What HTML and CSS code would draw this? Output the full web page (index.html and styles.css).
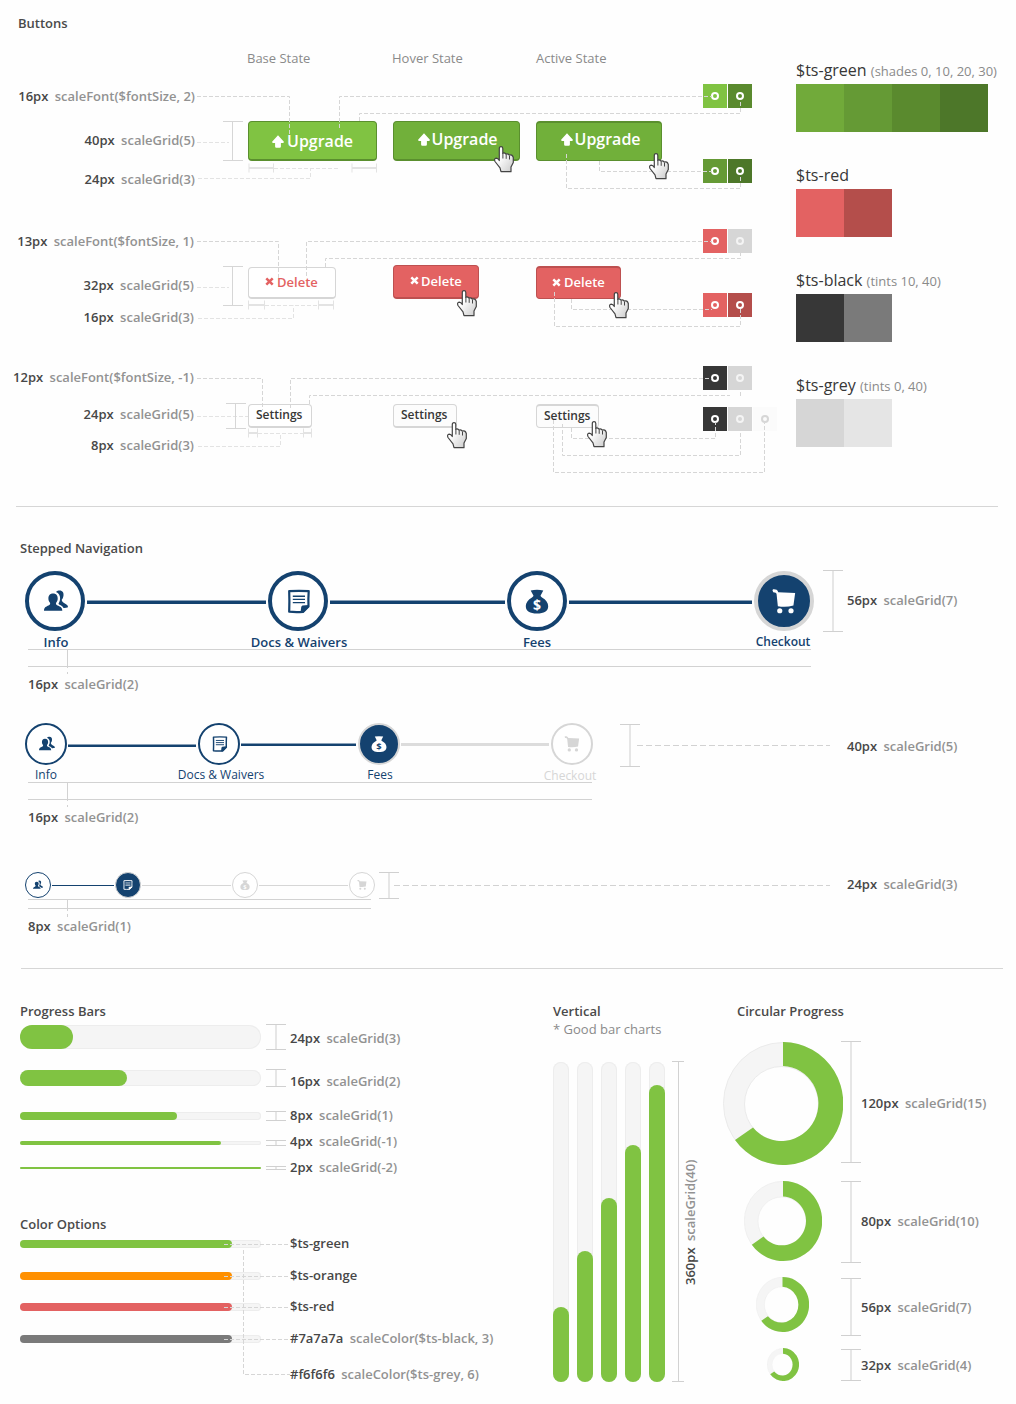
FILE: index.html
```html
<!DOCTYPE html>
<html lang="en">
<head>
<meta charset="utf-8">
<title>UI Scale Guide</title>
<link rel="stylesheet" href="styles.css">
</head>
<body>
<svg class="defs" width="0" height="0" aria-hidden="true">
  <defs>
    <linearGradient id="hand" x1="0" y1="0" x2="1" y2="1"><stop offset=".35" stop-color="#fff"/><stop offset="1" stop-color="#c9c9c9"/></linearGradient>
  </defs>
</svg>
<svg class="symbols" aria-hidden="true">
  <symbol id="i-people" viewBox="0 0 24 24">
    <path fill="currentColor" d="M9 4C5.700 4 4.400 6.300 4.400 9c0 2 .8 3.400 1.700 4.400.2 1.200-.3 2-1.600 2.600C2.500 17 0 17.600 0 21.200h18.300c0-3.600-2.500-4.200-4.700-5.200-1.300-.6-1.800-1.400-1.600-2.600.9-1 1.700-2.400 1.700-4.400 0-2.700-1.200-5-4.700-5z"/>
    <path fill="currentColor" d="M12 2.500C13 1.300 14.300 1 15.500 1c3.300 0 4.300 2.400 4 4.900-.2 2-.9 3.200-1.700 4.200-.1 1.200.3 2 1.500 2.900 2 1.500 4.700 2 4.700 4.700-1.500.6-3 .8-4.500.7-.9-1.500-2.300-2.400-4-3.100-1-.4-1.100-1-.7-1.700 1-1.700 1.300-3.200 1.300-5 0-2.700-1.300-4.900-4.100-6.100z"/>
  </symbol>
  <symbol id="i-doc" viewBox="0 0 24 24">
    <path fill="none" stroke="currentColor" stroke-width="2.200" stroke-linejoin="round" d="M2.200 1.700Q12 .9 21.700 1.700Q21.200 9 21.500 17L16 22.400Q8 22.900 2.200 22.200Q2.600 12 2.200 1.700z"/>
    <path fill="currentColor" d="M13.500 22.800L14.300 17.200L15.400 16L21.700 15.500V17.500L16.400 23z"/>
    <path stroke="currentColor" stroke-width="1.400" d="M5.800 6.700h12.200M5.800 9.900h12.200M5.800 13.100h12.200"/>
  </symbol>
  <symbol id="i-bag" viewBox="0 0 24 24">
    <path fill="currentColor" d="M5.700.9Q12-.3 18.300.9L15.500 6.300Q15.600 7 17 8C21 10 23.200 13.500 23.200 16.500C23.200 22 19 24 12 24S.8 22 .8 16.500C.8 13.500 3 10 7 8Q8.400 7 8.500 6.300z"/>
    <text class="coin" x="12" y="20.600" text-anchor="middle">$</text>
  </symbol>
  <symbol id="i-cart" viewBox="0 0 24 26">
    <path fill="currentColor" d="M0 1.200L.6.300C3 .1 5.400.5 6 3.300L23.600 4.200L21.800 17.200Q14 19.300 5.600 17.900L4.300 5.500C4 3.800 3 3.400.8 3.300z"/>
    <circle fill="currentColor" cx="7.600" cy="22.600" r="2.700"/><circle fill="currentColor" cx="19.300" cy="22.600" r="2.700"/>
  </symbol>
  <symbol id="i-up" viewBox="0 0 12 13"><path fill="currentColor" d="M6 .2L11.900 6.700L11.400 8H8.900V11.600Q8.900 12.800 7.700 12.800H4.300Q3.100 12.800 3.100 11.600V8H.6L.1 6.700z"/></symbol>
  <symbol id="i-x" viewBox="0 0 9 9"><path stroke="currentColor" stroke-width="2.500" d="M1.300 1.300L7.700 7.700M7.700 1.300L1.300 7.700"/></symbol>
  <symbol id="i-hand" viewBox="0 0 21 27">
    <path fill="url(#hand)" stroke="#444" stroke-width="1.200" stroke-linejoin="round" d="M5.300 14.500V2.500Q5.300.7 7 .7T8.800 2.500V7.300Q10.300 6.300 12 8.200Q13.500 7.200 15.200 9Q18.200 8 19.300 11.500V16.500L17 21V25.700H7L6 21.800L1 15.500Q-.2 12.400 2.200 12.200Q4 12.300 5.300 14.500z"/>
    <path fill="none" stroke="#444" stroke-width="1" d="M8.900 7v5.500M12.200 8.500v4.300M15.500 9.500v4"/>
  </symbol>
</svg>

<main class="sheet">
  <section class="buttons">
    <div class="board">
      <h2 class="title">Buttons</h2>
      <div class="row states"><span></span><span>Base State</span><span>Hover State</span><span>Active State</span></div>

      <div class="row group large">
        <div class="labels"><p><b>16px</b> scaleFont($fontSize, 2)</p><p><b>40px</b> scaleGrid(5)</p><p><b>24px</b> scaleGrid(3)</p></div>
        <div class="cell"><button class="btn green base"><svg><use href="#i-up"/></svg>Upgrade</button></div>
        <div class="cell"><button class="btn green hover"><svg><use href="#i-up"/></svg>Upgrade</button><svg class="cursor c1"><use href="#i-hand"/></svg></div>
        <div class="cell"><button class="btn green active"><svg><use href="#i-up"/></svg>Upgrade</button><svg class="cursor c2"><use href="#i-hand"/></svg></div>
        <div class="chips"><div><i class="g0"></i><i class="g2"></i></div><div><i class="g1"></i><i class="g3"></i></div></div>
      </div>

      <div class="row group medium">
        <div class="labels"><p><b>13px</b> scaleFont($fontSize, 1)</p><p><b>32px</b> scaleGrid(5)</p><p><b>16px</b> scaleGrid(3)</p></div>
        <div class="cell"><button class="btn red base"><svg><use href="#i-x"/></svg>Delete</button></div>
        <div class="cell"><button class="btn red hover"><svg><use href="#i-x"/></svg>Delete</button><svg class="cursor c3"><use href="#i-hand"/></svg></div>
        <div class="cell"><button class="btn red active"><svg><use href="#i-x"/></svg>Delete</button><svg class="cursor c4"><use href="#i-hand"/></svg></div>
        <div class="chips"><div><i class="r0"></i><i class="y0"></i></div><div><i class="r0"></i><i class="r1"></i></div></div>
      </div>

      <div class="row group small">
        <div class="labels"><p><b>12px</b> scaleFont($fontSize, -1)</p><p><b>24px</b> scaleGrid(5)</p><p><b>8px</b> scaleGrid(3)</p></div>
        <div class="cell"><button class="btn plain base">Settings</button></div>
        <div class="cell"><button class="btn plain hover">Settings</button><svg class="cursor c5"><use href="#i-hand"/></svg></div>
        <div class="cell"><button class="btn plain active">Settings</button><svg class="cursor c6"><use href="#i-hand"/></svg></div>
        <div class="chips"><div><i class="k0"></i><i class="y0"></i></div><div><i class="k0"></i><i class="y0"></i><i class="y2"></i></div></div>
      </div>
    </div>

    <aside class="palette">
      <div><h3>$ts-green <small>(shades 0, 10, 20, 30)</small></h3><p><i class="s1"></i><i class="g1"></i><i class="g2"></i><i class="g3"></i></p></div>
      <div><h3>$ts-red</h3><p><i class="r0"></i><i class="r1"></i></p></div>
      <div><h3>$ts-black <small>(tints 10, 40)</small></h3><p><i class="k0"></i><i class="k1"></i></p></div>
      <div><h3>$ts-grey <small>(tints 0, 40)</small></h3><p><i class="y0"></i><i class="y1"></i></p></div>
    </aside>

    <svg class="leaders" width="796" height="500" viewBox="0 0 796 500">
      <g class="dash">
        <path d="M197 96.500H289.500V134M339.500 128V96.500H712M359.500 121V113.500H740.500V100M566.500 154V188.500H740.500V175M599.500 161V171.500H712"/>
        <path d="M197 241.500H278.500V278M306.500 276V241.500H712M325.500 267V258.500H740.500V244M554.500 292V326.500H740.500V309M571.500 299V309.500H712"/>
        <path d="M197 378.500H262.500V410M290.500 408V378.500H712M309.500 404V395.500H730M740.500 396V382M571.500 428V438.500H715.500V422M562.500 424V455.500H740.500V423M553.500 420V472.500H764.500V423"/>
      </g>
      <g class="dash pale">
        <path d="M197 142.500H229M198 178.500H310.500V168.500M274 168.500H340M197 287.500H229M198 318.500H293.500V305.500M265 305.500H318M197 416.500H248M198 446.500H280.500V433.500M258 433.500H303"/>
      </g>
      <g class="solid">
        <path d="M223 121.500H243M223 160.500H243M232.500 121V161M223 266.500H243M223 305.500H243M232.500 266V306M226 403.500H246M226 428.500H246M235.500 403V429"/>
      </g>
      <g class="solid pale">
        <path d="M249 163.500V172.500M273.500 163.500V172.500M352 163.500V172.500M376.500 163.500V172.500M248.500 300.500V309.500M264.500 300.500V309.500M318.500 300.500V309.500M333.500 300.500V309.500M248.500 428.500V437.500M257.500 428.500V437.500M303.500 428.500V437.500M311.500 428.500V437.500"/>
        <path class="thick" d="M249 168H273M352 168H376M248 305H264M318 305H334M248 433H257M303 433H312"/>
      </g>
    </svg>
  </section>

  <section class="steps">
    <h2 class="title">Stepped Navigation</h2>
    <div class="track big">
      <ol>
        <li class="node shift"><i><svg><use href="#i-people"/></svg></i><span>Info</span></li><li class="wire w1"></li>
        <li class="node shift"><i><svg><use href="#i-doc"/></svg></i><span>Docs &amp; Waivers</span></li><li class="wire w2"></li>
        <li class="node"><i><svg><use href="#i-bag"/></svg></i><span>Fees</span></li><li class="wire w3"></li>
        <li class="node on"><i><svg><use href="#i-cart"/></svg></i><span>Checkout</span></li>
      </ol>
      <div class="span"></div>
      <p class="note"><b>56px</b> scaleGrid(7)</p>
    </div>
    <div class="rule rule-a"></div>
    <p class="note under"><b>16px</b> scaleGrid(2)</p>

    <div class="track mid">
      <ol>
        <li class="node"><i><svg><use href="#i-people"/></svg></i><span>Info</span></li><li class="wire w1"></li>
        <li class="node shift"><i><svg><use href="#i-doc"/></svg></i><span>Docs &amp; Waivers</span></li><li class="wire w2"></li>
        <li class="node on"><i><svg><use href="#i-bag"/></svg></i><span>Fees</span></li><li class="wire w3 off"></li>
        <li class="node off"><i><svg><use href="#i-cart"/></svg></i><span>Checkout</span></li>
      </ol>
      <div class="span"></div>
      <svg class="lead" width="193" height="1"><path d="M0 .5H193"/></svg>
      <p class="note"><b>40px</b> scaleGrid(5)</p>
    </div>
    <div class="rule rule-b"></div>
    <p class="note under"><b>16px</b> scaleGrid(2)</p>

    <div class="track tiny">
      <ol>
        <li class="node"><i><svg><use href="#i-people"/></svg></i></li><li class="wire w1"></li>
        <li class="node on"><i><svg><use href="#i-doc"/></svg></i></li><li class="wire w2 off"></li>
        <li class="node off"><i><svg><use href="#i-bag"/></svg></i></li><li class="wire w3 off"></li>
        <li class="node off"><i><svg><use href="#i-cart"/></svg></i></li>
      </ol>
      <div class="span"></div>
      <svg class="lead" width="436" height="1"><path d="M0 .5H436"/></svg>
      <p class="note"><b>24px</b> scaleGrid(3)</p>
    </div>
    <div class="rule rule-c"></div>
    <p class="note under"><b>8px</b> scaleGrid(1)</p>
  </section>

  <section class="progress">
    <div class="bars">
      <h2 class="title">Progress Bars</h2>
      <div class="bar-row b24"><div class="bar"><i style="width:53px"></i></div><div class="span"></div><p class="note"><b>24px</b> scaleGrid(3)</p></div>
      <div class="bar-row b16"><div class="bar"><i style="width:107px"></i></div><div class="span"></div><p class="note"><b>16px</b> scaleGrid(2)</p></div>
      <div class="bar-row b8"><div class="bar"><i style="width:157px"></i></div><div class="span"></div><p class="note"><b>8px</b> scaleGrid(1)</p></div>
      <div class="bar-row b4"><div class="bar"><i style="width:201px"></i></div><div class="span"></div><p class="note"><b>4px</b> scaleGrid(-1)</p></div>
      <div class="bar-row b2"><div class="bar"><i style="width:241px"></i></div><div class="span"></div><p class="note"><b>2px</b> scaleGrid(-2)</p></div>

      <div class="colors">
        <h2 class="title">Color Options</h2>
        <div class="bar-row"><div class="bar"><i class="c-green"></i></div><p class="note"><b>$ts-green</b></p></div>
        <div class="bar-row"><div class="bar"><i class="c-orange"></i></div><p class="note"><b>$ts-orange</b></p></div>
        <div class="bar-row"><div class="bar"><i class="c-red"></i></div><p class="note"><b>$ts-red</b></p></div>
        <div class="bar-row"><div class="bar"><i class="c-grey"></i></div><p class="note"><b>#7a7a7a</b> scaleColor($ts-black, 3)</p></div>
        <p class="note last"><b>#f6f6f6</b> scaleColor($ts-grey, 6)</p>
        <svg class="leaders" width="290" height="170" viewBox="0 1215 290 170"><g class="dash"><path d="M224 1244.500H290M224 1276.500H290M224 1307.500H290M224 1339.500H290M243.500 1250V1374.500H290"/></g></svg>
      </div>
    </div>

    <div class="vertical">
      <h2 class="title">Vertical</h2>
      <p class="hint">* Good bar charts</p>
      <div class="chart">
        <div class="col"><i style="height:75px"></i></div><div class="col"><i style="height:131px"></i></div><div class="col"><i style="height:184px"></i></div><div class="col"><i style="height:237px"></i></div><div class="col"><i style="height:297px"></i></div>
        <div class="span"></div>
        <p class="note up"><b>360px</b> scaleGrid(40)</p>
      </div>
    </div>

    <div class="circular">
      <h2 class="title">Circular Progress</h2>
      <div class="ring r120"><svg width="120" height="123" viewBox="0 0 120 123"><path class="rest" fill-rule="evenodd" d="M60 .5A59.500 61 0 1 0 60 122.500A59.500 61 0 1 0 60 .5zM58.500 24.500A37 37.500 0 1 1 58.500 99.500A37 37.500 0 1 1 58.500 24.500z"/><path class="done" d="M60 0A60 61.500 0 1 1 12 98L30 85.500A37 37.500 0 1 0 60 24z"/></svg><div class="span"></div><p class="note"><b>120px</b> scaleGrid(15)</p></div>
      <div class="ring r80"><svg width="78" height="80" viewBox="0 0 120 123" preserveAspectRatio="none"><path class="rest" fill-rule="evenodd" d="M60 .5A59.500 61 0 1 0 60 122.500A59.500 61 0 1 0 60 .5zM58.500 24.500A37 37.500 0 1 1 58.500 99.500A37 37.500 0 1 1 58.500 24.500z"/><path class="done" d="M60 0A60 61.500 0 1 1 12 98L30 85.500A37 37.500 0 1 0 60 24z"/></svg><div class="span"></div><p class="note"><b>80px</b> scaleGrid(10)</p></div>
      <div class="ring r56"><svg width="53" height="55" viewBox="0 0 120 123" preserveAspectRatio="none"><path class="rest" fill-rule="evenodd" d="M60 .5A59.500 61 0 1 0 60 122.500A59.500 61 0 1 0 60 .5zM58 22A39 40 0 1 1 58 102A39 40 0 1 1 58 22z"/><path class="done" d="M60 0A60 61.500 0 1 1 12 98L27 87.500A39 40 0 1 0 60 22z"/></svg><div class="span"></div><p class="note"><b>56px</b> scaleGrid(7)</p></div>
      <div class="ring r32"><svg width="32" height="33" viewBox="0 0 120 123" preserveAspectRatio="none"><path class="rest" fill-rule="evenodd" d="M60 .5A59.500 61 0 1 0 60 122.500A59.500 61 0 1 0 60 .5zM58 21A39 41 0 1 1 58 103A39 41 0 1 1 58 21z"/><path class="done" d="M60 0A60 61.500 0 1 1 12 98L27 88A39 41 0 1 0 60 21z"/></svg><div class="span"></div><p class="note"><b>32px</b> scaleGrid(4)</p></div>
    </div>
  </section>
</main>
</body>
</html>
```
FILE: styles.css
```css
* { box-sizing: border-box; margin: 0; padding: 0; }
body { background: #fefefe; font-family: "Open Sans", "Noto Sans", sans-serif; font-size: 13px; line-height: 18px; color: #8a8a8a; }
svg { display: block; }
ol { list-style: none; }
i { display: block; font-style: normal; }
.defs { position: absolute; }
.symbols { display: none; }
.sheet { width: 1016px; height: 1404px; overflow: hidden; }
.title { font-size: 13px; line-height: 18px; font-weight: 600; color: #4a4a4a; }
b { font-weight: 600; color: #474747; margin-right: 3px; }
p { white-space: nowrap; font-weight: 600; color: #929292; }

/* palette colours */
.g0 { background: #80c342; } .s1 { background: #71aa3a; } .g1 { background: #659a35; }
.g2 { background: #5a8a2e; } .g3 { background: #4d7729; }
.r0 { background: #e36262; } .r1 { background: #b44e4b; }
.k0 { background: #373737; } .k1 { background: #7a7a7a; }
.y0 { background: #d6d6d6; } .y1 { background: #e5e5e5; } .y2 { background: #fbfbfb; }

/* buttons */
.buttons { display: flex; height: 507px; position: relative; }
.buttons::after { content: ""; width: 982px; height: 1px; background: #d6d6d6; position: absolute; left: 16px; bottom: 0; }
.board { width: 796px; padding-top: 14px; }
.board .title { padding-left: 18px; height: 35px; }
.row { display: grid; grid-template-columns: 248px 145px 143px 167px 93px; }
.states { height: 31px; line-height: 18px; }
.states span { margin-left: -1px; }
.states span:last-child { margin-left: 0; }
.large { height: 145px; } .medium { height: 136px; } .small { height: 125px; }
.labels { width: 195px; text-align: right; padding-top: 7px; display: flex; flex-direction: column; gap: 26px; }
.medium .labels, .small .labels { width: 194px; }
.large .labels p:last-child { margin-top: -5px; }
.medium .labels p:last-child { margin-top: -12px; }
.small .labels { gap: 19px; }
.small .labels p:last-child { margin-top: -6px; }
.cell { position: relative; padding-top: 41px; }
.btn { display: flex; align-items: center; border: 1px solid; border-radius: 4px; font: 600 16px/22px "Open Sans", sans-serif; height: 40px; }
.green { color: #fff; background: #71b03a; border-color: #5a8f2e; padding-left: 24px; gap: 1.5px; }
.green svg { width: 12px; height: 13px; }
.green.base { width: 129px; background: #80c342; border-bottom-width: 2px; padding-left: 23px; gap: 3px; }
.green.base svg { margin-top: 2px; }
.green.hover { width: 127px; padding-bottom: 3px; border-bottom-width: 2px; }
.green.active { width: 126px; padding-bottom: 5px; border-top-width: 2px; }
.medium .cell { padding-top: 40px; }
.medium .cell:nth-child(2) { padding-top: 42px; }
.medium .cell:nth-child(4) { padding-top: 41px; }
.red { font-size: 13px; line-height: 18px; height: 34px; color: #fff; background: #e36262; border-color: #bd5050; padding-left: 16px; gap: 2px; }
.red svg { width: 9px; height: 9px; }
.red.base { width: 88px; height: 32px; background: #fff; color: #e36262; border-color: #d6d6d6; border-bottom-width: 2px; padding-bottom: 2px; gap: 3px; }
.red.hover { width: 86px; border-bottom-width: 2px; padding-bottom: 2px; }
.red.active { width: 85px; height: 33px; border-top-width: 2px; padding-left: 15px; padding-bottom: 2px; gap: 3px; }
.small .cell { padding-top: 43px; }
.plain { font-size: 12px; line-height: 16px; width: 64px; height: 24px; color: #373737; background: #fcfcfc; border-color: #d6d6d6; padding-left: 7px; padding-bottom: 1px; border-bottom-width: 2px; }
.plain.base { background: #fff; }
.plain.active { width: 63px; border-bottom-width: 1px; border-top-width: 2px; }
.cursor { position: absolute; width: 21px; height: 27px; z-index: 2; }
.c1 { left: 101px; top: 66px; } .c2 { left: 113px; top: 73px; }
.c3 { left: 64px; top: 65px; } .c4 { left: 73px; top: 67px; }
.c5 { left: 54px; top: 61px; } .c6 { left: 51px; top: 60px; }
.chips { display: flex; flex-direction: column; padding-top: 4px; gap: 51px; }
.medium .chips { gap: 40px; } .small .chips { padding-top: 5px; gap: 17px; }
.chips div { display: flex; gap: 1px; }
.chips i { width: 24px; height: 24px; display: grid; place-items: center; }
.chips i::after { content: ""; width: 4px; height: 4px; border: 2px solid #fff; border-radius: 50%; }
.chips .y0::after { border-color: #f4f4f4; } .chips .y2::after { border-color: #d6d6d6; }
.palette { padding-top: 57px; }
.palette div { height: 105px; }
.palette h3 { font-size: 16px; font-weight: 400; line-height: 26px; height: 27px; color: #373737; white-space: nowrap; }
.palette small { font-size: 13px; color: #8a8a8a; line-height: 1; }
.palette p { display: flex; }
.palette i { width: 48px; height: 48px; }
.leaders { position: absolute; left: 0; top: 0; z-index: 1; fill: none; stroke: #d6d6d6; stroke-width: 1; }
.dash { stroke-dasharray: 4 2; }
.pale { stroke: #e3e3e3; }
.thick { stroke-width: 2; }

/* stepped navigation */
.steps { height: 461px; padding-top: 32px; position: relative; }
.steps .title { padding-left: 20px; }
.track { display: flex; padding-left: 25px; height: 75px; }
.track ol { display: flex; color: #14426f; }
.node { display: flex; flex-direction: column; align-items: center; }
.node i { border: 4px solid #14426f; border-radius: 50%; display: grid; place-items: center; background: #fff; --coin: #fff; }
.node span { white-space: nowrap; font-weight: 600; }
.wire { background: linear-gradient(#8aa1b8 1px, #14426f 1px); }
.node.on i { background: #14426f; border-color: #d6d6d6; color: #fff; --coin: #14426f; }
.node.off { color: #d6d6d6; } .node.off i { border-color: #d6d6d6; }
.wire.off { background: #dcdcdc; }
.coin { font: 700 14px "Open Sans", sans-serif; fill: var(--coin); }
.span { width: 20px; border: solid #d0d0d0; border-width: 1px 0; display: flex; justify-content: center; }
.span::before { content: ""; width: 2px; background: #e6e6e6; }
.lead { fill: none; stroke: #d2d2d2; stroke-dasharray: 6 3; }
.big { margin-top: 13px; height: 79px; }
.big ol { padding-top: 1px; }
.big .node { width: 60px; } .big .node i { width: 60px; height: 60px; flex: none; } .big .node svg { width: 24px; height: 25px; }
.big .node span { margin-top: 2px; height: 18px; }
.big .shift svg, .big .shift span { margin-left: 2px; }
.big .wire { height: 4px; margin: 29px 2px 0; }
.big .w1 { width: 179px; } .big .w2 { width: 175px; } .big .w3 { width: 183px; margin-right: 2px; }
.big .node.on span { font-size: 12px; margin-left: -2px; margin-top: 2px; }
.big .span { height: 62px; margin: 0 4px 0 9px; }
.big .note { margin-top: 21px; }
.rule { margin-left: 28px; border: solid #d2d2d2; border-width: 1px 0; height: 18px; width: 783px; }
.rule::before { content: ""; display: block; margin-left: 39px; width: 1px; height: 24px; background: linear-gradient(#d2d2d2 0 18px, transparent 18px 22px, #d2d2d2 22px); }
.under { padding-left: 28px; }
.rule + .under { margin-top: 8px; }
.mid { margin-top: 30px; height: 59px; }
.mid .node { width: 42px; } .mid .node i { width: 42px; height: 42px; border-width: 2px; flex: none; } .mid .node svg { width: 16px; height: 16px; }
.mid .node:first-child svg, .mid .shift svg { margin-left: 1px; }
.mid .node span { font-size: 12px; line-height: 18px; font-weight: 400; margin-top: 1px; }
.mid .shift span { margin-left: 4px; }
.mid .node.on span { margin-left: 2px; }
.mid .node.off span { margin-top: 2px; margin-left: -4px; }
.mid .wire { height: 3px; margin: 20px 2px 0 1px; }
.mid .w1 { width: 128px; margin-top: 21px; } .mid .w2 { width: 115px; } .mid .w3 { width: 148px; }
.mid .span { height: 43px; margin: 1px 0 0 27px; }
.mid .lead { margin: 22px 17px 0 -3px; }
.mid .note { margin-top: 14px; }
.rule-b { width: 564px; }
.tiny { margin-top: 46px; height: 27px; }
.tiny .node { width: 26px; } .tiny .node i { width: 26px; height: 26px; border-width: 1px; } .tiny .node svg { width: 10px; height: 10px; }
.tiny .wire { height: 1px; margin: 13px 1px 0; background: #14426f; }
.tiny .wire.off { background: #d6d6d6; }
.tiny .w1 { width: 62px; } .tiny .w2 { width: 89px; } .tiny .w3 { width: 89px; }
.tiny .span { height: 27px; margin-left: 4px; }
.tiny .lead { margin: 13px 17px 0 -5px; }
.tiny .note { margin-top: 3px; }
.rule-c { width: 343px; height: 10px; }
.rule-c::before { height: 17px; background: linear-gradient(#d2d2d2 0 11px, transparent 11px 14px, #d2d2d2 14px); }
.steps::after { content: ""; width: 982px; height: 1px; background: #d6d6d6; position: absolute; left: 21px; bottom: -1px; }

/* progress */
.progress { display: flex; padding: 34px 0 0 20px; }
.bars { width: 533px; }
.bar-row { display: grid; grid-template-columns: 241px 20px auto; grid-template-rows: 100%; column-gap: 5px; align-items: center; }
.bar-row .note { margin-left: -1px; }
.bar { background: #f5f5f5; box-shadow: inset 0 0 0 1px #ededed; border-radius: 12px; height: 100%; }
.bar i { height: 100%; border-radius: 12px; background: #80c342; }
.bar-row .span { height: calc(100% + 2px); }
.b24 { height: 24px; margin-top: 5px; } .b16 { height: 16px; margin-top: 21px; } .b8 { height: 8px; margin-top: 26px; }
.b4 { height: 4px; margin-top: 21px; } .b2 { height: 2px; margin-top: 22px; }
.b24 .note { padding-top: 2px; } .b16 .note { padding-top: 6px; }
.b8 .note, .b2 .note, .colors .bar-row .note { margin-top: -2px; }
.b4 .note { margin-top: -4px; }
.b8 .note, .b4 .note, .b2 .note { height: 18px; }
.colors { margin: 46px 0 0 -20px; padding-left: 20px; position: relative; }
.colors .bar-row { height: 8px; margin-top: 24px; grid-template-columns: 241px auto; column-gap: 30px; }
.colors .title + .bar-row { margin-top: 7px; }
.colors .bar-row:nth-child(4) { margin-top: 23px; }
.colors .bar i { width: 212px; }
.colors .c-orange { background: #ff9000; } .colors .c-red { background: #e36262; } .colors .c-grey { background: #7a7a7a; }
.last { margin: 22px 0 0 270px; }
.vertical { width: 170px; }
.hint { font-weight: 400; color: #8a8a8a; }
.chart { display: flex; gap: 8px; margin-top: 24px; height: 320px; }
.col { width: 16px; background: #f5f5f5; box-shadow: inset 0 0 0 1px #ededed; border-radius: 8px; display: flex; align-items: flex-end; }
.col i { width: 16px; border-radius: 8px; background: #80c342; }
.chart .span { width: 12px; height: 321px; margin: -1px 0 0 -1px; }
.chart .span::before { width: 1px; background: #d2d2d2; }
.up { writing-mode: vertical-rl; transform: rotate(180deg); height: 126px; margin: 97px 0 0 -11px; }
.up b { margin: 0 0 3px; }
.circular .title { padding-left: 14px; height: 40px; }
.ring { display: grid; grid-template-columns: 118px 20px auto; grid-template-rows: 100%; justify-items: start; align-items: center; }
.ring > svg { justify-self: center; margin-left: 2px; }
.rest { fill: #f5f5f5; stroke: #ebebeb; stroke-width: 1; }
.done { fill: #80c342; }
.r120 { height: 123px; } .r120 .span { height: 122px; margin-top: -3px; } .r120 .note { margin-top: -2px; }
.r80 { height: 80px; margin-top: 16px; } .r80 .span { height: 82px; margin-top: 2px; }
.r56 { height: 55px; margin-top: 16px; } .r56 .span { height: 58px; margin-top: 5px; } .r56 .note { padding-top: 4px; }
.r56 > svg { margin-left: 1px; }
.r32 { height: 33px; margin-top: 16px; } .r32 .span { height: 32px; margin-top: 1px; }
```
